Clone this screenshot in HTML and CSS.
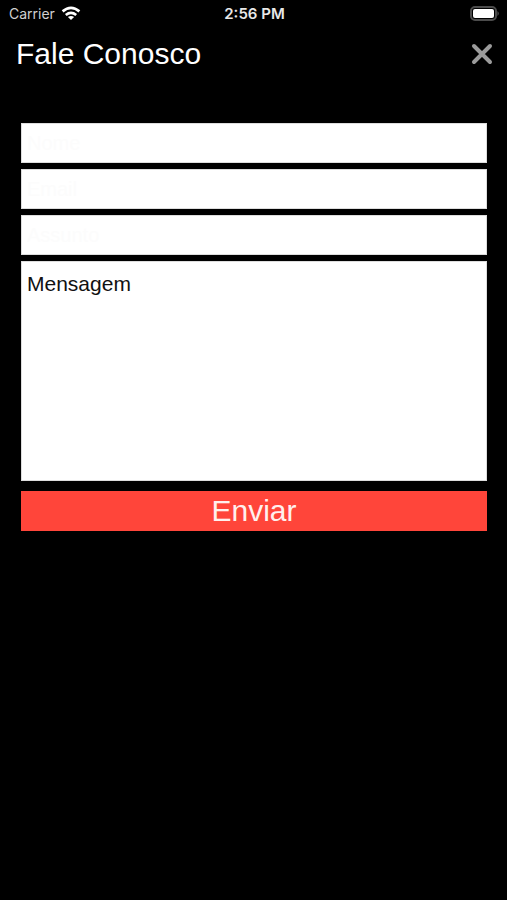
FILE: index.html
```html
<!DOCTYPE html>
<html lang="pt-BR">
<head>
<meta charset="utf-8">
<meta name="viewport" content="width=device-width, initial-scale=1">
<title>Fale Conosco</title>
<link rel="stylesheet" href="styles.css">
</head>
<body>
<div class="status">
  <div class="carrier">
    <span>Carrier</span>
    <svg width="20" height="15" viewBox="0 0 20 15" fill="none" stroke="#fff" stroke-width="2.7" aria-hidden="true">
      <path d="M1.6 5.4Q10-1.6 18.4 5.4"/>
      <path d="M4.8 9Q10 4.8 15.2 9"/>
      <path d="M10 14L6.9 11.1Q10 8.8 13.1 11.1Z" fill="#fff" stroke="none"/>
    </svg>
  </div>
  <time class="clock">2:56 PM</time>
  <svg class="battery" width="30" height="15" viewBox="0 0 30 15" aria-hidden="true">
    <rect x="1" y="1" width="25" height="13" rx="4" fill="#000" stroke="#4c4c4c" stroke-width="2"/>
    <rect x="3" y="3" width="21" height="9" rx="2" fill="#fff"/>
    <path d="M27.500 5Q30 7.500 27.500 10Z" fill="#5c5c5c"/>
  </svg>
</div>
<header class="header">
  <h1>Fale Conosco</h1>
  <button class="close" type="button" aria-label="Fechar">
    <svg width="22" height="22" viewBox="0 0 22 22" stroke="#9b9b9b" stroke-width="4" stroke-linecap="round" aria-hidden="true">
      <path d="M3 3L19 19M19 3L3 19"/>
    </svg>
  </button>
</header>
<form class="form">
  <input class="field" type="text" aria-label="Nome" placeholder="Nome">
  <input class="field" type="email" aria-label="Email" placeholder="Email">
  <input class="field" type="text" aria-label="Assunto" placeholder="Assunto">
  <textarea class="field message" aria-label="Mensagem">Mensagem</textarea>
  <button class="send" type="button">Enviar</button>
</form>
</body>
</html>
```
FILE: styles.css
```css
* { box-sizing: border-box; }

body {
  margin: 0;
  min-height: 100vh;
  background: #000;
  color: #fff;
  font-family: "Liberation Sans", Arial, sans-serif;
}

.status {
  display: grid;
  grid-template-columns: 1fr auto 1fr;
  align-items: center;
  height: 27px;
  padding: 0 7px 0 9px;
  font-family: Inter, sans-serif;
  font-size: 14px;
}

.carrier {
  display: flex;
  align-items: center;
  gap: 6px;
  color: #d0d0d0;
}

.clock {
  color: #e8e8e8;
  font-size: 15px;
  font-weight: 600;
}

.battery { justify-self: end; }

.header {
  display: flex;
  align-items: center;
  justify-content: space-between;
  height: 54px;
  padding: 0 14px 0 16px;
}

h1 {
  margin: 0;
  font-size: 30px;
  font-weight: 400;
}

.close {
  display: flex;
  padding: 0;
  border: 0;
  background: none;
}

.form {
  display: flex;
  flex-direction: column;
  gap: 6px;
  padding: 42px 20px 0 21px;
}

.field {
  width: 100%;
  height: 40px;
  margin: 0;
  padding: 0 5px;
  border: 1px solid #ddd;
  border-radius: 0;
  background: #fff;
  color: #111;
  font: 20px "Liberation Sans", Arial, sans-serif;
  outline: 0;
}

.field::placeholder { color: #fcfcfc; opacity: 1; }

.message {
  height: 220px;
  padding: 10px 5px;
  font-size: 21px;
  resize: none;
}

.send {
  height: 40px;
  margin-top: 4px;
  padding: 0;
  border: 0;
  background: #ff453a;
  color: #fff0ee;
  font: 30px "Liberation Sans", Arial, sans-serif;
}
```
